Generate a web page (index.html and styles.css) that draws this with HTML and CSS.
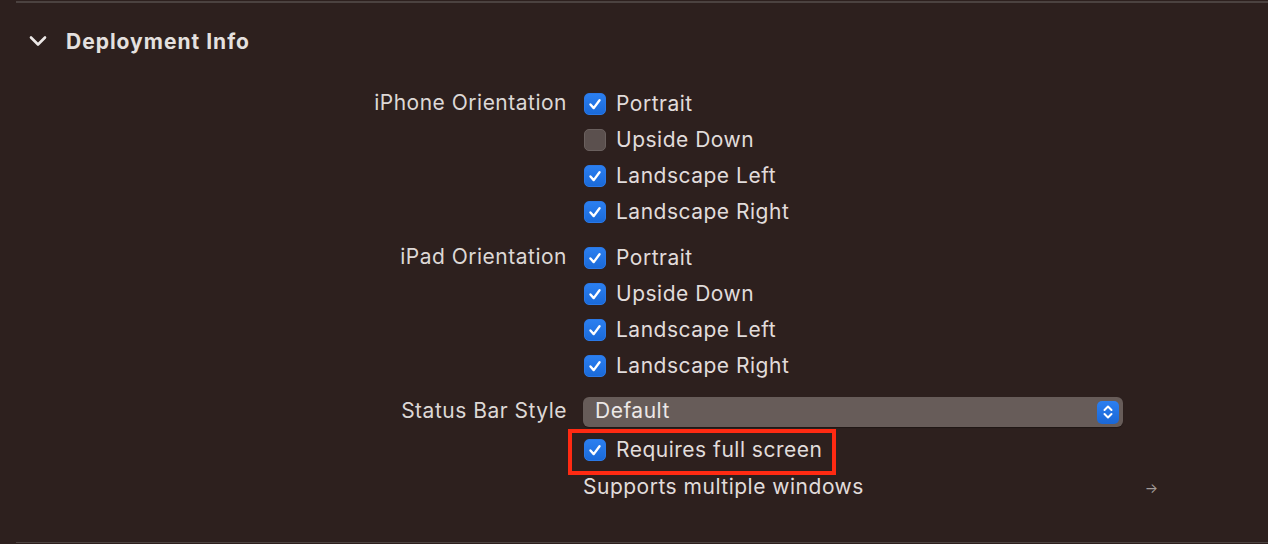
FILE: index.html
```html
<!DOCTYPE html>
<html>
<head>
<meta charset="utf-8">
<link rel="stylesheet" href="styles.css">
</head>
<body>
<section class="panel">
  <header class="head">
    <svg class="chev" width="18" height="12" viewBox="0 0 18 12"><polyline points="2,2.5 9,9.5 16,2.5" fill="none" stroke="#ece8e7" stroke-width="2.6" stroke-linecap="round" stroke-linejoin="round"/></svg>
    <h2 class="title">Deployment Info</h2>
  </header>
  <div class="form">
    <div class="group">
      <div class="label">iPhone Orientation</div>
      <div class="list">
        <div class="row"><span class="cb on"><svg viewBox="0 0 22 22"><path d="M6 11.5 L9.6 15.5 L16 6.8" fill="none" stroke="#fff" stroke-width="2.6" stroke-linecap="round" stroke-linejoin="round"/></svg></span>Portrait</div>
        <div class="row"><span class="cb"></span>Upside Down</div>
        <div class="row"><span class="cb on"><svg viewBox="0 0 22 22"><path d="M6 11.5 L9.6 15.5 L16 6.8" fill="none" stroke="#fff" stroke-width="2.6" stroke-linecap="round" stroke-linejoin="round"/></svg></span>Landscape Left</div>
        <div class="row"><span class="cb on"><svg viewBox="0 0 22 22"><path d="M6 11.5 L9.6 15.5 L16 6.8" fill="none" stroke="#fff" stroke-width="2.6" stroke-linecap="round" stroke-linejoin="round"/></svg></span>Landscape Right</div>
      </div>
    </div>
    <div class="group">
      <div class="label">iPad Orientation</div>
      <div class="list">
        <div class="row"><span class="cb on"><svg viewBox="0 0 22 22"><path d="M6 11.5 L9.6 15.5 L16 6.8" fill="none" stroke="#fff" stroke-width="2.6" stroke-linecap="round" stroke-linejoin="round"/></svg></span>Portrait</div>
        <div class="row"><span class="cb on"><svg viewBox="0 0 22 22"><path d="M6 11.5 L9.6 15.5 L16 6.8" fill="none" stroke="#fff" stroke-width="2.6" stroke-linecap="round" stroke-linejoin="round"/></svg></span>Upside Down</div>
        <div class="row"><span class="cb on"><svg viewBox="0 0 22 22"><path d="M6 11.5 L9.6 15.5 L16 6.8" fill="none" stroke="#fff" stroke-width="2.6" stroke-linecap="round" stroke-linejoin="round"/></svg></span>Landscape Left</div>
        <div class="row"><span class="cb on"><svg viewBox="0 0 22 22"><path d="M6 11.5 L9.6 15.5 L16 6.8" fill="none" stroke="#fff" stroke-width="2.6" stroke-linecap="round" stroke-linejoin="round"/></svg></span>Landscape Right</div>
      </div>
    </div>
    <div class="group">
      <div class="label">Status Bar Style</div>
      <div class="list">
        <div class="row">
          <div class="popup">
            <span>Default</span>
            <span class="stepper"><svg width="12" height="16" viewBox="0 0 12 16"><polyline points="2.5,6 6,2.5 9.5,6" fill="none" stroke="#fff" stroke-width="2" stroke-linecap="round" stroke-linejoin="round"/><polyline points="2.5,10 6,13.5 9.5,10" fill="none" stroke="#fff" stroke-width="2" stroke-linecap="round" stroke-linejoin="round"/></svg></span>
          </div>
        </div>
      </div>
    </div>
    <div class="group tight">
      <div class="label"></div>
      <div class="list">
        <div class="row hl"><span class="cb on"><svg viewBox="0 0 22 22"><path d="M6 11.5 L9.6 15.5 L16 6.8" fill="none" stroke="#fff" stroke-width="2.6" stroke-linecap="round" stroke-linejoin="round"/></svg></span>Requires full screen<span class="mark"></span></div>
      </div>
    </div>
    <div class="group tight">
      <div class="label"></div>
      <div class="list">
        <div class="row plain"><span>Supports multiple windows</span><span class="arrow">&#8594;</span></div>
      </div>
    </div>
  </div>
</section>
</body>
</html>
```
FILE: styles.css
```css
html, body {
  margin: 0;
  padding: 0;
  background: #2d201e;
  height: 544px;
  overflow: hidden;
}
body {
  font-family: Inter, "Liberation Sans", sans-serif;
  color: #e1dcdb;
}
.panel {
  margin: 1px 0 0 16px;
  height: 542px;
  box-sizing: border-box;
  border-top: 2px solid #4b4240;
  border-bottom: 1px solid #4b4240;
}
.head {
  height: 78px;
  display: flex;
  align-items: center;
}
.chev {
  margin-left: 13px;
  margin-top: -2px;
}
.title {
  margin: -2px 0 0 19px;
  font-size: 21px;
  font-weight: 700;
  color: #e4e0df;
  letter-spacing: 1px;
}
.form {
  margin-top: 5px;
  display: flex;
  flex-direction: column;
  gap: 10px;
}
.group {
  display: grid;
  grid-template-columns: 551px 1fr;
  column-gap: 16px;
}
.group.tight {
  margin-top: -8px;
}
.label {
  text-align: right;
  font-size: 21px;
  letter-spacing: 0.5px;
  height: 36px;
  line-height: 34px;
  color: #ddd8d6;
}
.list {
  display: flex;
  flex-direction: column;
}
.row {
  height: 36px;
  display: flex;
  align-items: center;
  font-size: 21px;
  line-height: 34px;
  letter-spacing: 0.5px;
  position: relative;
}
.cb {
  width: 22px;
  height: 22px;
  box-sizing: border-box;
  border-radius: 5px;
  margin-left: 1px;
  margin-right: 10px;
  background: #5b504e;
  border: 1px solid #6a605e;
  display: flex;
}
.cb.on {
  background: linear-gradient(#2b7ff0, #1a6ad9);
  border-color: #2a78e6;
}
.cb svg {
  width: 20px;
  height: 20px;
}
.popup {
  width: 540px;
  height: 30px;
  box-sizing: border-box;
  border-radius: 6px;
  background: #675c59;
  display: flex;
  align-items: center;
  justify-content: space-between;
  padding: 0 4px 0 12px;
  font-size: 21px;
  color: #ece8e7;
  box-shadow: 0 1px 1px rgba(0,0,0,0.3);
}
.popup > span:first-child {
  line-height: 28px;
  padding-bottom: 2px;
}
.stepper {
  width: 22px;
  height: 23px;
  border-radius: 5px;
  background: linear-gradient(#2b7ff0, #1a67d6);
  display: flex;
  align-items: center;
  justify-content: center;
}
.mark {
  position: absolute;
  left: -15px;
  top: -3px;
  width: 268px;
  height: 46px;
  box-sizing: border-box;
  border: 4px solid #ff2a12;
}
.plain {
  width: 577px;
  justify-content: space-between;
}
.plain > span:first-child {
  padding-bottom: 2px;
}
.arrow {
  font-size: 14px;
  color: #a39c9a;
  margin-right: 2px;
  letter-spacing: 0;
}
```
